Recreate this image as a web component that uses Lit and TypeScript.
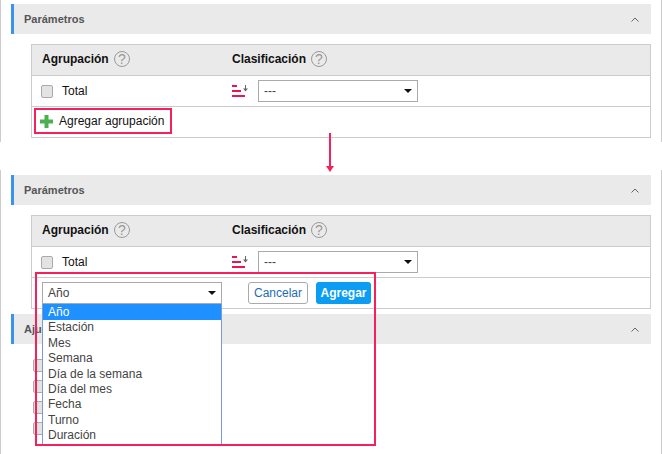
import { LitElement, html, css, svg } from "lit";
import { customElement } from "lit/decorators.js";

const OPTIONS = ["Año", "Estación", "Mes", "Semana", "Día de la semana", "Día del mes", "Fecha", "Turno", "Duración"];

const chevron = html`<svg class="chev" width="8" height="5" viewBox="0 0 8 5"><path d="M0.5 4.5 L4 1 L7.5 4.5" fill="none" stroke="#666" stroke-width="1"/></svg>`;
const help = html`<svg class="help" width="16" height="16" viewBox="0 0 16 16"><circle cx="8" cy="8" r="7.5" fill="none" stroke="#999" stroke-width="1"/><text x="8" y="13" text-anchor="middle" font-family="Liberation Sans" font-weight="400" font-size="14" fill="#999">?</text></svg>`;
const sort = html`<svg class="sort" width="16" height="12" viewBox="0 0 16 12"><g fill="#e8174f"><rect x="0" y="0" width="5" height="2"/><rect x="0" y="5" width="9" height="2"/><rect x="0" y="10" width="13" height="2"/></g>${svg`<path d="M13.5 0 V4" stroke="#666" stroke-width="1"/><path d="M11 3.5 H16 L13.5 6.5 Z" fill="#666"/>`}</svg>`;
const plus = html`<svg class="plus" width="13" height="13" viewBox="0 0 13 13"><rect x="4.5" y="0" width="4" height="13" fill="#4caf50"/><rect x="0" y="4.5" width="13" height="4" fill="#4caf50"/></svg>`;

@customElement("app-root")
export class AppRoot extends LitElement {
  static styles = css`
    :host { display: block; position: relative; width: 662px; height: 454px; overflow: hidden; background: #fff; font-family: "Liberation Sans", Arial, sans-serif; font-size: 12px; color: #111; }
    .panel { box-sizing: border-box; border-left: 1px solid #ccc; border-right: 1px solid #ccc; padding: 0 10px; }
    .p1 { height: 142px; padding-top: 4px; }
    .p2 { height: 284px; margin-top: 28px; padding-top: 5px; }
    .head { box-sizing: border-box; height: 30px; display: flex; align-items: center; justify-content: space-between; background: #eaeaea; border-left: 3px solid #3b93f0; padding: 0 12px 0 10px; font-size: 11px; font-weight: 700; color: #555; }
    .tbl { box-sizing: border-box; margin: 10px 0 0 20px; border: 1px solid #ccc; }
    .row { box-sizing: border-box; height: 31px; display: flex; align-items: center; border-top: 1px solid #ccc; }
    .row.first { height: 30px; border-top: 0; background: #eaeaea; font-weight: 700; padding-bottom: 2px; }
    .col-a { box-sizing: border-box; width: 200px; padding-left: 10px; display: flex; align-items: center; }
    .col-a.with-check { padding-left: 9px; }
    .col-b { display: flex; align-items: center; }
    .help { margin-left: 5px; }
    .check { box-sizing: border-box; width: 12px; height: 13px; background: #e3e3e3; border: 1px solid #aaa; border-radius: 2px; flex: none; }
    .total { margin-left: 9px; }
    .sort { margin-right: 10px; }
    .sel { box-sizing: border-box; height: 22px; display: flex; align-items: center; justify-content: space-between; border: 1px solid #aaa; padding: 0 5px; background: #fff; color: #444; }
    .sel.small { width: 160px; }
    .sel.wide { width: 180px; }
    .caret { width: 0; height: 0; border-left: 4px solid transparent; border-right: 4px solid transparent; border-top: 4px solid #111; }
    .add { display: flex; align-items: center; padding: 0 0 2px 8px; }
    .plus { margin: 1px 6px 0 0; }
    .editor { display: flex; align-items: center; padding-left: 10px; }
    .btn { box-sizing: border-box; height: 22px; display: flex; align-items: center; justify-content: center; border-radius: 3px; }
    .cancel { width: 60px; margin-left: 26px; border: 1px solid #aaa; color: #1c6db3; }
    .ok { width: 55px; margin-left: 8px; background: #0a9df2; color: #fff; font-weight: 700; }
    .p2 .tbl + .head { margin-top: 5px; }
    .checks { display: flex; flex-direction: column; gap: 8px; padding: 15px 0 0 22px; }
    .list { position: absolute; left: 42px; top: 304px; box-sizing: border-box; width: 180px; height: 141px; background: #fff; border: 1px solid #7b9bd8; border-top: 0; color: #444; }
    .opt { height: 15.4px; line-height: 17.4px; padding-left: 5px; }
    .opt.on { background: #1e90ff; box-shadow: 0 1px 0 #1e90ff; color: #fff; }
    .mark { position: absolute; box-sizing: border-box; border: 2px solid #f5205c; pointer-events: none; }
    .m1 { left: 34px; top: 108px; width: 138px; height: 26px; }
    .m2 { left: 35px; top: 272px; width: 341px; height: 174px; }
    .arrow { position: absolute; left: 326px; top: 133px; }
  `;

  render() {
    const header = html`<div class="row first"><div class="col-a">Agrupación ${help}</div><div class="col-b">Clasificación ${help}</div></div>`;
    const total = html`<div class="row"><div class="col-a with-check"><span class="check"></span><span class="total">Total</span></div><div class="col-b">${sort}<div class="sel small"><span>---</span><span class="caret"></span></div></div></div>`;
    return html`
      <section class="panel p1">
        <div class="head">Parámetros ${chevron}</div>
        <div class="tbl">${header}${total}
          <div class="row"><div class="add">${plus}<span>Agregar agrupación</span></div></div>
        </div>
      </section>
      <section class="panel p2">
        <div class="head">Parámetros ${chevron}</div>
        <div class="tbl">${header}${total}
          <div class="row"><div class="editor"><div class="sel wide"><span>Año</span><span class="caret"></span></div><div class="btn cancel">Cancelar</div><div class="btn ok">Agregar</div></div></div>
        </div>
        <div class="head">Ajustes ${chevron}</div>
        <div class="checks"><span class="check"></span><span class="check"></span><span class="check"></span><span class="check"></span></div>
      </section>
      <div class="list">${OPTIONS.map((o, i) => html`<div class="opt ${i === 0 ? "on" : ""}">${o}</div>`)}</div>
      <div class="mark m1"></div>
      <div class="mark m2"></div>
      <svg class="arrow" width="8" height="40" viewBox="0 0 8 40"><rect x="3" y="0" width="2" height="35" fill="#f5205c"/><path d="M0 33 H8 L4 39 Z" fill="#f5205c"/></svg>
    `;
  }
}
